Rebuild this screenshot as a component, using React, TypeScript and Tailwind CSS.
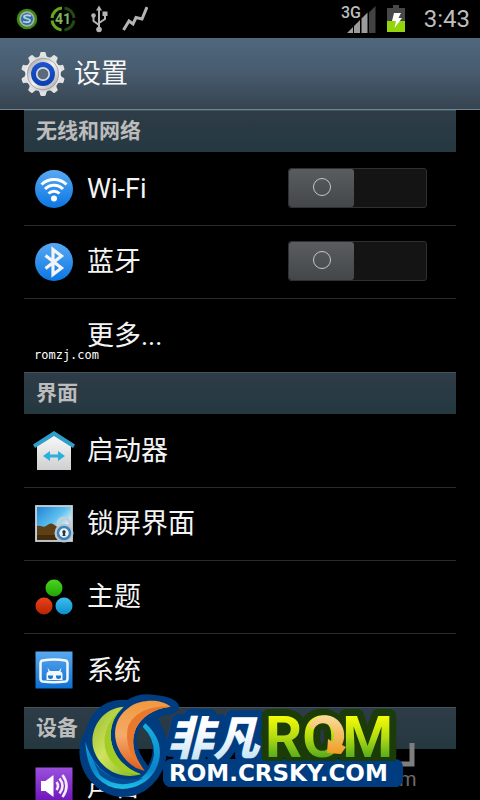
import type { ReactNode } from "react";

const FONT = "font-['Roboto','Noto_Sans_CJK_SC',sans-serif]";

function StatusBar() {
  return (
    <div className="flex h-[38px] shrink-0 items-center justify-between bg-black pr-[10px] pl-4">
      <div className="flex items-center gap-3">
        <svg width="22" height="24" viewBox="0 0 22 24" aria-label="同步">
          <circle cx="11" cy="12" r="9" fill="#a9adb0" stroke="#3d8a12" strokeWidth="2.600" />
          <circle cx="11" cy="12" r="6" fill="#2b6fa6" />
          <path d="M15 9c-3-1.300-7-.8-7 1 0 2 6 1.500 6 3.500s-4 2.200-7 1" fill="none" stroke="#b9cfdc" strokeWidth="1.800" />
        </svg>
        <svg width="26" height="26" viewBox="0 0 26 26" aria-label="41%">
          <g fill="none" strokeWidth="3">
            <path d="M12 2A11 11 0 0 0 2 12M2 14.500A11 11 0 0 0 11.500 24" stroke="#61a81f" />
            <path d="M14.500 2A11 11 0 0 1 24 12M24 14.500A11 11 0 0 1 14.500 24" stroke="#224a12" />
          </g>
          <text x="13" y="18" textAnchor="middle" fontSize="14" fontWeight="700" fill="#7fb55c">41</text>
        </svg>
        <svg width="22" height="28" viewBox="0 0 22 28" fill="none" stroke="#b4b4b4" strokeWidth="2" aria-label="USB">
          <path d="M11 4v20M11 20l-5.500-4v-4M11 18l6-4V9" />
          <path d="M11 .5l3 5H8z" fill="#b4b4b4" stroke="none" />
          <circle cx="5.500" cy="10.500" r="2.300" fill="#b4b4b4" stroke="none" />
          <path d="M14.500 6.500h5V11h-5z" fill="#b4b4b4" stroke="none" />
          <circle cx="11" cy="24.500" r="2.800" fill="#b4b4b4" stroke="none" />
        </svg>
        <svg width="26" height="26" viewBox="0 0 26 26" fill="none" stroke="#b4b4b4" strokeWidth="3" aria-label="信号图">
          <path d="M1.500 24l5.500-9 4 3 3-6.500 6 1.500 5-12" />
        </svg>
      </div>
      <div className="flex items-center">
        <svg width="36" height="30" viewBox="0 0 36 30" aria-label="3G">
          <path d="M28 8.500L34.500 2v27H28z" fill="#424242" />
          <path d="M6 29l6-6v6zM13 22l6-6v13h-6zM20.500 14.500l6-6V29h-6z" fill="#9c9c9c" />
          <text x="0" y="14" fontSize="16" fontWeight="500" fill="#bdbdbd" stroke="#000" strokeWidth="2" paintOrder="stroke">3G</text>
        </svg>
        <svg className="ml-[10px]" width="18" height="28" viewBox="0 0 18 28" aria-label="充电">
          <path d="M6 0h6v3h6v14H0V3h6z" fill="#484848" />
          <path d="M0 16h18v11H0z" fill="#93d50a" />
          <path d="M7 8h7l-2.500 5H15L7.500 23l1.500-7H5z" fill="#fff" />
        </svg>
        <span className="ml-[19px] text-2xl text-[#bebebe]">3:43</span>
      </div>
    </div>
  );
}

function GearIcon() {
  const teeth = [0, 36, 72, 108, 144, 180, 216, 252, 288, 324];
  return (
    <svg width="44" height="46" viewBox="-23 -23 46 46" aria-hidden="true">
      <defs>
        <linearGradient id="gear" x1="0" y1="0" x2="0" y2="1">
          <stop offset="0" stopColor="#dcdcdc" />
          <stop offset=".5" stopColor="#f8f8f8" />
          <stop offset="1" stopColor="#cfcfcf" />
        </linearGradient>
        <linearGradient id="gearFace" x1="0" y1="0" x2="1" y2="1">
          <stop offset="0" stopColor="#9b9b9b" />
          <stop offset=".5" stopColor="#f2f2f2" />
          <stop offset="1" stopColor="#a4a4a4" />
        </linearGradient>
        <linearGradient id="gearBlue" x1="0" y1="0" x2="0" y2="1">
          <stop offset="0" stopColor="#1f54cf" />
          <stop offset="1" stopColor="#0a3fae" />
        </linearGradient>
      </defs>
      {teeth.map((a) => (
        <path key={a} d="M-5-17Q-3-19-3-21.500Q-3-23-1.500-23h3Q3-23 3-21.500 3-19 5-17z" fill="#e2e2e2" transform={`rotate(${a})`} />
      ))}
      <circle r="18.500" fill="url(#gear)" />
      <circle r="16.500" fill="url(#gearFace)" stroke="#8d8d8d" strokeWidth=".7" />
      <circle r="12.500" fill="url(#gearBlue)" />
      <circle r="6.500" fill="#5a6c7c" stroke="#d5d9dd" strokeWidth="1.800" />
    </svg>
  );
}

function BlueDisc({ children }: { children: ReactNode }) {
  return (
    <svg width="40" height="40" viewBox="0 0 40 40" aria-hidden="true">
      <defs>
        <linearGradient id="disc" x1="0" y1="0" x2="0" y2="1">
          <stop offset="0" stopColor="#58a9f3" />
          <stop offset="1" stopColor="#0b76e2" />
        </linearGradient>
      </defs>
      <circle cx="20" cy="20" r="19" fill="url(#disc)" />
      {children}
    </svg>
  );
}

const wifiIcon = (
  <BlueDisc>
    <g fill="none" stroke="#fff" strokeWidth="3">
      <path d="M7.500 15.500a18 18 0 0 1 25 0" />
      <path d="M11 20a12.500 12.500 0 0 1 18 0" />
      <path d="M14.500 24.500a8 8 0 0 1 11 0" />
    </g>
    <circle cx="20" cy="29.500" r="3" fill="#fff" />
  </BlueDisc>
);

const bluetoothIcon = (
  <BlueDisc>
    <path d="M11.500 13.500L27.500 26l-8.500 6.500V7.500l8.500 6.500-16 12.500" fill="none" stroke="#f2f4f5" strokeWidth="3.200" />
  </BlueDisc>
);

const launcherIcon = (
  <svg width="42" height="42" viewBox="0 0 42 42" aria-hidden="true">
    <defs>
      <linearGradient id="house" x1="0" y1="0" x2="0" y2="1">
        <stop offset="0" stopColor="#fafafa" />
        <stop offset="1" stopColor="#cfcfd1" />
      </linearGradient>
    </defs>
    <path d="M4 15L21 4l17 11v25H4z" fill="url(#house)" />
    <path d="M21 1L0 14.500 2 18 21 6l19 12 2-3.500z" fill="#2d9fc8" />
    <path d="M10 26l7-5v3.500h8V21l7 5-7 5v-3.500h-8V31z" fill="#2bb0dc" />
  </svg>
);

const lockScreenIcon = (
  <svg width="40" height="38" viewBox="0 0 40 38" aria-hidden="true">
    <defs>
      <linearGradient id="sky" x1="0" y1="0" x2="1" y2="1">
        <stop offset="0" stopColor="#1f7fd0" />
        <stop offset=".45" stopColor="#5cc0f0" />
        <stop offset=".7" stopColor="#d8f2fb" />
      </linearGradient>
    </defs>
    <rect x="2" y="1" width="36" height="35" fill="url(#sky)" />
    <path d="M3 21c4-1 6 2 9 0s4-3 7-2l9 6v11H3z" fill="#5f3f16" />
    <path d="M3 30h22v6H3z" fill="#432b0c" />
    <rect x="2" y="1" width="36" height="35" fill="none" stroke="#c9d3da" strokeWidth="1.800" />
    <path d="M24 21v-2a6 6 0 0 1 12 0v2" fill="none" stroke="#c5ced5" strokeWidth="3" />
    <circle cx="30" cy="28" r="9.500" fill="#b9c6cf" />
    <circle cx="30" cy="28" r="6" fill="#edf2f5" stroke="#3c83b9" strokeWidth="2.500" />
    <path d="M30 25a2 2 0 0 1 1 3.500l.5 2.500h-3L29 28.500a2 2 0 0 1 1-3.500z" fill="#263844" />
  </svg>
);

const themeIcon = (
  <svg width="38" height="36" viewBox="0 0 38 36" aria-hidden="true">
    <defs>
      <linearGradient id="dotG" x1="0" y1="0" x2="0" y2="1"><stop offset="0" stopColor="#4bd51e" /><stop offset="1" stopColor="#1fa505" /></linearGradient>
      <linearGradient id="dotR" x1="0" y1="0" x2="0" y2="1"><stop offset="0" stopColor="#e8431c" /><stop offset="1" stopColor="#b92400" /></linearGradient>
      <linearGradient id="dotB" x1="0" y1="0" x2="0" y2="1"><stop offset="0" stopColor="#3dbdf0" /><stop offset="1" stopColor="#0b8fcb" /></linearGradient>
    </defs>
    <circle cx="19" cy="9" r="8.500" fill="url(#dotG)" />
    <circle cx="9" cy="27" r="8.500" fill="url(#dotR)" />
    <circle cx="29" cy="27" r="8.500" fill="url(#dotB)" />
  </svg>
);

const systemIcon = (
  <svg width="38" height="40" viewBox="0 0 38 40" aria-hidden="true">
    <defs>
      <linearGradient id="sys" x1="0" y1="0" x2="0" y2="1">
        <stop offset="0" stopColor="#5aa8ef" />
        <stop offset="1" stopColor="#0e70d4" />
      </linearGradient>
    </defs>
    <path d="M.5.500h37v37H.5z" fill="url(#sys)" />
    <path d="M7.500 9.500q11.500-2 23 0 2 .5 2 3v15q0 2.500-2 3-11.500 1.500-23 0-2-.5-2-3v-15q0-2.500 2-3z" fill="none" stroke="#f4f7fa" strokeWidth="2.500" />
    <path d="M11.500 29v-6q0-2 2-2.600l-1-4 2.500 3.600h9l2.500-3.600-1 4q2 .6 2 2.600v6z" fill="#f4f7fa" />
    <path d="M13 24.500h5v1.500a2.500 2 0 0 1-5 0zM21 24.500h5v1.500a2.500 2 0 0 1-5 0z" fill="#1b75d2" />
  </svg>
);

const soundIcon = (
  <svg width="38" height="40" viewBox="0 0 38 40" aria-hidden="true">
    <defs>
      <linearGradient id="snd" x1="0" y1="0" x2="0" y2="1">
        <stop offset="0" stopColor="#9a50dc" />
        <stop offset="1" stopColor="#6a10b8" />
      </linearGradient>
    </defs>
    <path d="M.5.500h37v37H.5z" fill="url(#snd)" />
    <path d="M6 14h4.500l8-6v22l-8-6H6z" fill="#fff" />
    <g fill="none" stroke="#f3eafa" strokeWidth="2.600">
      <path d="M21.500 15q3 4 0 8M24.500 11.500q6 7.500 0 15M27.500 8q8 11 0 22" />
    </g>
  </svg>
);

function Section({ title, children }: { title: string; children: ReactNode }) {
  return (
    <section>
      <h2 className="flex h-[42px] items-center border-t border-[#42555f] bg-linear-to-b from-[#2e3c47] to-[#243840] px-3 text-[21px] leading-none font-bold text-[#bcbcbc]">
        {title}
      </h2>
      <div className="divide-y divide-[#2b2b2b] pt-px">{children}</div>
    </section>
  );
}

function Row({ label, icon, children }: { label: string; icon?: ReactNode; children?: ReactNode }) {
  return (
    <div className="flex h-[73px] items-center pr-[29px] pl-[9px]">
      <span className="flex w-[42px] shrink-0 justify-center">{icon}</span>
      <span className="ml-3 flex-1 text-[27px] leading-9 whitespace-nowrap text-[#f4f4f4]">{label}</span>
      {children}
    </div>
  );
}

function Toggle({ label }: { label: string }) {
  return (
    <label className="relative mb-[2px] flex h-10 w-[139px] overflow-hidden rounded-[3px] border border-[#303030] bg-[#141414]">
      <input type="checkbox" role="switch" aria-label={label} className="peer absolute inset-0 appearance-none" />
      <span className="flex w-[65px] items-center justify-center rounded-[3px] bg-linear-to-b from-[#595d5f] to-[#434749] peer-checked:translate-x-[72px]">
        <span className="mb-[2px] size-[18px] rounded-full border border-[#c4c6c7]" />
      </span>
    </label>
  );
}

function SiteLogo() {
  return (
    <svg className="pointer-events-none absolute top-[690px] left-[76px]" width="344" height="110" viewBox="76 690 344 110" aria-label="非凡 ROM">
      <defs>
        <linearGradient id="lime" x1="0" y1="0" x2="1" y2="1"><stop offset="0" stopColor="#93ba2c" /><stop offset=".45" stopColor="#cfe35c" /><stop offset="1" stopColor="#7fb51c" /></linearGradient>
        <linearGradient id="orange" x1="0" y1="0" x2="0" y2="1"><stop offset="0" stopColor="#f09a40" /><stop offset=".5" stopColor="#f4aa68" /><stop offset="1" stopColor="#e05a1c" /></linearGradient>
        <linearGradient id="cyan" x1="0" y1="0" x2="0" y2="1"><stop offset="0" stopColor="#16b0e0" /><stop offset=".7" stopColor="#0b84c8" /><stop offset="1" stopColor="#1fc0e6" /></linearGradient>
        <linearGradient id="ice" x1="0" y1="0" x2="0" y2="1"><stop offset=".4" stopColor="#fff" /><stop offset=".9" stopColor="#c2e1f5" /></linearGradient>
        <linearGradient id="leaf" x1="0" y1="0" x2="0" y2="1"><stop offset=".2" stopColor="#f4fb08" /><stop offset=".5" stopColor="#b4dc10" /><stop offset=".82" stopColor="#4fa81e" /></linearGradient>
        <linearGradient id="amber" x1="0" y1="0" x2="0" y2="1"><stop offset="0" stopColor="#f9dc9c" /><stop offset="1" stopColor="#ef9d24" /></linearGradient>
      </defs>

      <path d="M398 764h14v-21" fill="none" stroke="#7e7e7e" strokeWidth="5" />
      <text x="399" y="786" fontSize="20" fill="#6b6b6b">m</text>

      <g transform="translate(70 690) scale(.3333)">
        <path fillRule="evenodd" fill="#003d80" d="M28 185Q30 145 48 120Q62 62 112 38Q142 26 172 30Q205 8 250 14Q322 20 328 50Q326 72 290 74Q274 78 264 88Q294 130 290 190Q284 262 225 302Q160 340 95 302Q30 260 28 185zM204 125Q190 155 218 205L234 228Q268 165 220 112Q210 112 204 125z" />
        <path d="M226 100Q276 145 269 200Q258 270 190 292Q125 310 80 262Q50 228 46 155Q64 215 104 247Q150 280 200 272Q242 250 252 195Q254 145 218 110z" fill="url(#cyan)" />
        <path d="M66 205Q110 285 220 264Q150 305 90 256z" fill="#064d98" />
        <path d="M161 50C95 55 62 115 68 165C75 215 130 275 213 253C160 235 125 190 122 140C122 100 135 75 161 50z" fill="url(#lime)" />
        <path d="M161 50C112 90 92 140 110 190C130 235 170 250 213 253C160 235 125 190 122 140C122 100 135 75 161 50z" fill="#a3cc24" />
        <path d="M302 50C270 25 215 28 180 50C135 80 125 130 145 175C162 212 190 235 224 243C192 200 180 160 198 115C215 80 250 56 302 50z" fill="url(#orange)" />
        <path d="M302 50C240 44 190 70 174 110C164 155 180 205 224 243C192 200 180 160 198 115C215 80 250 56 302 50z" fill="#e8782b" />
      </g>

      <rect x="163" y="759" width="240" height="28" rx="8" fill="#003d80" />
      <text x="167" y="755" fontSize="46" fontWeight="900" fontStyle="italic" fill="url(#ice)" stroke="#003d80" strokeWidth="14" strokeLinejoin="round" paintOrder="stroke" className="font-['Noto_Sans_CJK_SC',sans-serif]">非凡</text>
      <text x="265" y="757" fontSize="58" fontWeight="700" fill="url(#leaf)" stroke="#1b3c08" strokeWidth="14" strokeLinejoin="round" paintOrder="stroke">ROM</text>
      <path d="M308 726a19 20 0 0 1 34 19l4 2-5 7-14-1 1-14 5 3a11 13 0 0 0-19-13z" fill="url(#amber)" />
      <rect x="163" y="761" width="240" height="26" rx="8" fill="#003d80" />
      <text x="169" y="781" fontSize="23" fontWeight="700" fill="#fff" className="font-['DejaVu_Sans',sans-serif]">ROM.CRSKY.COM</text>
    </svg>
  );
}

export default function App() {
  return (
    <main className={`relative flex h-screen flex-col overflow-hidden bg-black ${FONT}`}>
      <StatusBar />
      <header className="flex h-[72px] shrink-0 items-center gap-[9px] border-b border-[#6b8792] bg-linear-to-b from-[#50677d] via-[#475b6d] to-[#364350] pl-[21px]">
        <GearIcon />
        <h1 className="text-[27px] leading-9 text-[#f6f6f6]">设置</h1>
      </header>
      <div className="px-6">
        <Section title="无线和网络">
          <Row label="Wi-Fi" icon={wifiIcon}><Toggle label="Wi-Fi" /></Row>
          <Row label="蓝牙" icon={bluetoothIcon}><Toggle label="蓝牙" /></Row>
          <Row label="更多..." />
        </Section>
        <Section title="界面">
          <Row label="启动器" icon={launcherIcon} />
          <Row label="锁屏界面" icon={lockScreenIcon} />
          <Row label="主题" icon={themeIcon} />
          <Row label="系统" icon={systemIcon} />
        </Section>
        <Section title="设备">
          <Row label="声音" icon={soundIcon} />
        </Section>
      </div>
      <span className="absolute top-[347px] left-[34px] font-['DejaVu_Sans_Mono',monospace] text-xs leading-4 text-white">romzj.com</span>
      <SiteLogo />
    </main>
  );
}
